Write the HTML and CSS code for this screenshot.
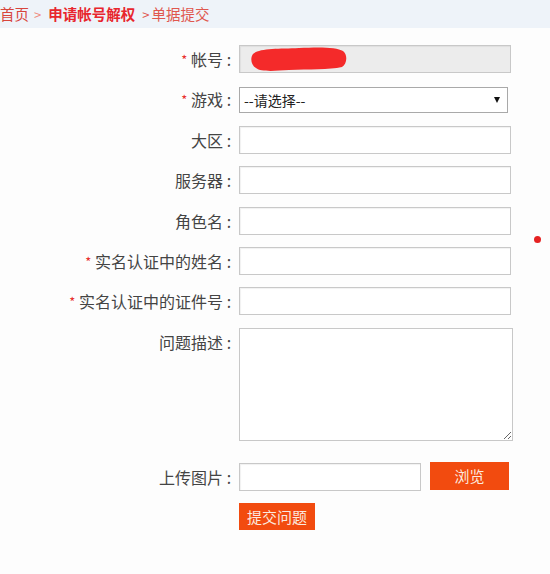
FILE: index.html
```html
<!DOCTYPE html>
<html lang="zh-CN">
<head>
<meta charset="utf-8">
<title>单据提交</title>
<link rel="stylesheet" href="styles.css">
</head>
<body>
<div class="crumbs">
  <span class="crumb-home">首页</span><span class="sep">&gt;</span><span class="crumb-cur">申请帐号解权</span><span class="crumb-last"><span class="sep2">&gt;</span>单据提交</span>
</div>

<form class="form">
  <label class="lbl"><span class="req">*</span> 帐号<span class="colon">:</span></label>
  <div class="field">
    <div class="input input-disabled">
      <svg class="scribble" width="100" height="26" viewBox="0 0 100 26">
        <path d="M4 8 C10 2 30 3 50 2 C70 1 88 1 94 5 C99 9 98 18 93 21 C80 24 60 23 40 24 C25 25 12 26 7 22 C2 19 1 12 4 8 Z" fill="#f42a2a"/>
      </svg>
    </div>
  </div>

  <label class="lbl"><span class="req">*</span> 游戏<span class="colon">:</span></label>
  <div class="field field-end">
    <div class="select-wrap">
      <select class="select">
        <option>--请选择--</option>
      </select>
      <span class="arrow"></span>
    </div>
  </div>

  <label class="lbl">大区<span class="colon">:</span></label>
  <div class="field"><input class="input" type="text"></div>

  <label class="lbl">服务器<span class="colon">:</span></label>
  <div class="field"><input class="input" type="text"></div>

  <label class="lbl">角色名<span class="colon">:</span></label>
  <div class="field"><input class="input" type="text"></div>

  <label class="lbl"><span class="req">*</span> 实名认证中的姓名<span class="colon">:</span></label>
  <div class="field"><input class="input" type="text"></div>

  <label class="lbl"><span class="req">*</span> 实名认证中的证件号<span class="colon">:</span></label>
  <div class="field"><input class="input" type="text"></div>

  <label class="lbl">问题描述<span class="colon">:</span></label>
  <div class="field"><textarea class="textarea"></textarea></div>

  <label class="lbl lbl-upload">上传图片<span class="colon">:</span></label>
  <div class="field upload">
    <input class="input input-file" type="text">
    <button type="button" class="btn btn-browse">浏览</button>
  </div>

  <div></div>
  <div class="field">
    <button type="button" class="btn btn-submit">提交问题</button>
  </div>
</form>

<span class="dot"></span>
</body>
</html>
```

FILE: styles.css
```css
html, body {
  margin: 0;
  padding: 0;
  background: #fdfdfd;
}
body {
  position: relative;
  width: 550px;
  height: 574px;
  overflow: hidden;
  font-family: "Noto Sans CJK SC", "Noto Sans", sans-serif;
  font-size: 16px;
  color: #444;
}

.crumbs {
  height: 28px;
  line-height: 28px;
  background: #eef3f9;
  font-size: 14.5px;
  padding-left: 0;
  white-space: nowrap;
}
.crumb-home { color: #d8453c; }
.sep { color: #ee8a80; margin: 0 7px 0 5px; font-size: 13px; }
.sep2 { color: #e0574e; margin: 0 2px 0 7px; font-size: 13px; }
.crumb-cur { color: #e8262d; font-weight: bold; }
.crumb-last { color: #e0574e; }

.form {
  display: grid;
  grid-template-columns: 233px 274px;
  column-gap: 6px;
  row-gap: 12.4px;
  grid-template-rows: 28px 28px 28px 28px 28px 28px 28px 113px 37.6px 27px;
  margin-top: 17px;
}

.lbl {
  text-align: right;
  line-height: 28px;
  white-space: nowrap;
  color: #444;
}
.colon {
  display: inline-block;
  width: 8px;
  margin-left: 2px;
  text-align: center;
}
.req { color: #e8312d; font-size: 13px; vertical-align: 1px; }

.field {
  display: flex;
  align-items: stretch;
}
.field-end { align-items: flex-end; }

.input {
  box-sizing: border-box;
  width: 272px;
  height: 28px;
  border: 1px solid #c8c8c8;
  background: #fff;
  margin: 0;
  padding: 0 4px;
  font: inherit;
  box-shadow: inset 1px 1px 1px rgba(0,0,0,0.06);
}
.input-disabled {
  position: relative;
  background: #ececec;
}
.scribble {
  position: absolute;
  left: 9px;
  top: 0;
}

.select-wrap {
  position: relative;
  width: 269px;
  height: 26px;
}
.select {
  appearance: none;
  -webkit-appearance: none;
  box-sizing: border-box;
  width: 269px;
  height: 26px;
  border: 1px solid #a9a9a9;
  border-radius: 0;
  background: #fff;
  font-family: "Noto Sans CJK SC", "Noto Sans", sans-serif;
  font-size: 14px;
  color: #222;
  padding: 0 4px;
  margin: 0;
}
.arrow {
  position: absolute;
  right: 8px;
  top: 10px;
  width: 0;
  height: 0;
  border-left: 3.5px solid transparent;
  border-right: 3.5px solid transparent;
  border-top: 6px solid #111;
}

.textarea {
  box-sizing: border-box;
  width: 274px;
  height: 113px;
  border: 1px solid #c8c8c8;
  margin: 0;
  padding: 4px;
  font: inherit;
  background: #fff;
}

.lbl-upload, .upload { align-self: end; }
.upload { gap: 9px; align-items: flex-start; height: 28px; }
.input-file { width: 182px; }

.btn {
  border: none;
  margin: 0;
  background: #f24b0f;
  color: #fbe9df;
  font-family: "Noto Sans CJK SC", "Noto Sans", sans-serif;
  font-size: 15px;
  cursor: pointer;
}
.btn-browse {
  width: 79px;
  height: 28px;
  margin-top: -1px;
}
.btn-submit {
  width: 76px;
  height: 27px;
  padding: 0;
}

.dot {
  position: absolute;
  left: 534px;
  top: 236px;
  width: 7px;
  height: 7px;
  border-radius: 50%;
  background: #e52222;
}
```
